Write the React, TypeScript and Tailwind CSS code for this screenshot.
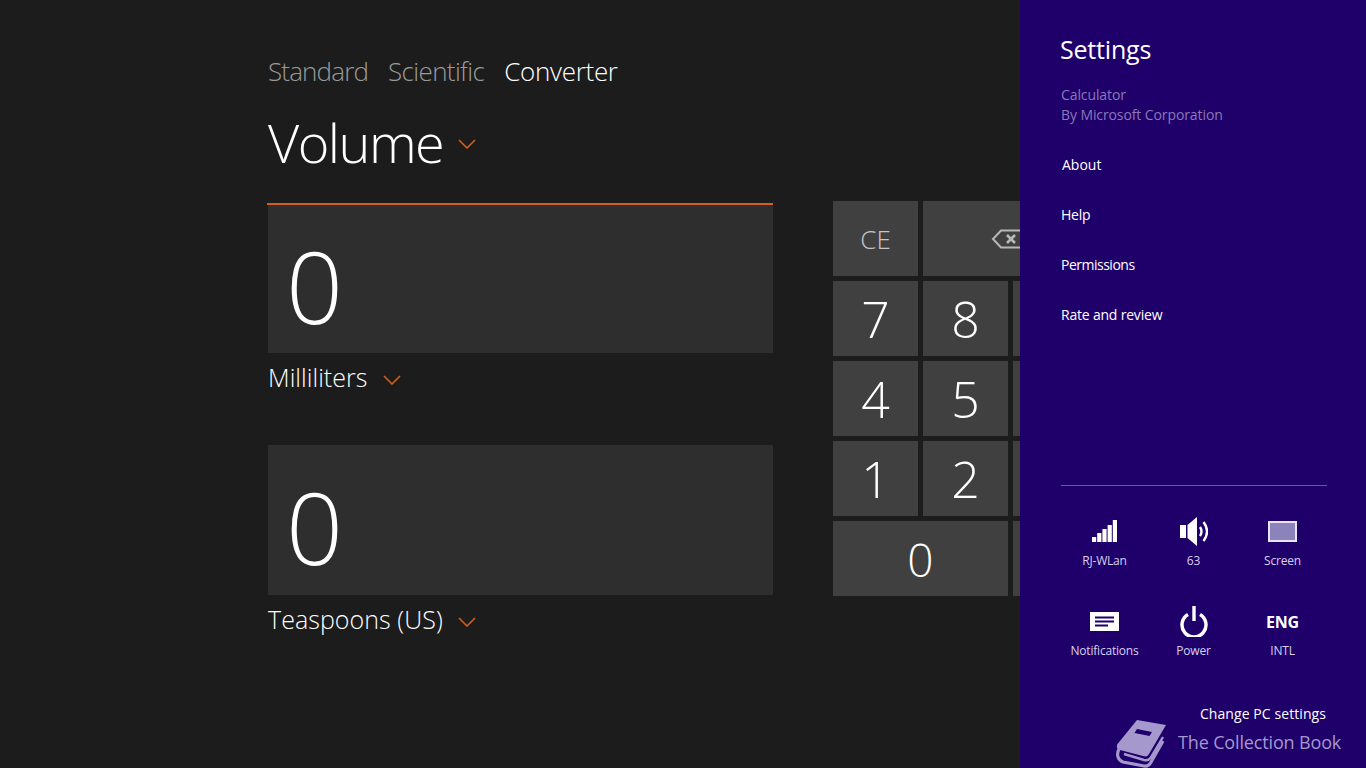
import { ReactNode } from "react";

const font = { ui: "font-['Open_Sans','Noto_Sans',sans-serif]" };

function Chevron({ className = "" }: { className?: string }) {
  return (
    <svg className={className} width="18" height="10" viewBox="0 0 18 10" fill="none" stroke="#d2601a" strokeWidth="1.6">
      <path d="M1 1l8 8 8-8" />
    </svg>
  );
}

function Key({ children, className = "text-white text-[50px]" }: { children?: ReactNode; className?: string }) {
  return (
    <div className={`bg-[#404040] flex items-center justify-center font-light leading-none ${className}`}>
      {children}
    </div>
  );
}

function Display({ label, height }: { label: string; height: string }) {
  return (
    <div>
      <div className={`${height} bg-[#2e2e2e] flex items-center pl-[18px]`}>
        <span className="text-white font-light text-[100px] leading-none mt-[12px]">0</span>
      </div>
      <div className="flex items-center gap-[15px] h-[50px] text-white text-[25px] font-light tracking-[0.05px]">
        <span>{label}</span>
        <Chevron className="mt-[4px]" />
      </div>
    </div>
  );
}

function Tile({ icon, label }: { icon: ReactNode; label: string }) {
  return (
    <div className="w-[89px] flex flex-col items-center">
      <div className="h-[32px] flex items-center justify-center">{icon}</div>
      <span className="text-[12px] leading-[16px] mt-[6px] text-[#d8d0ee] tracking-[-0.2px]">{label}</span>
    </div>
  );
}

export default function App() {
  return (
    <div className={`h-screen w-full flex overflow-hidden bg-[#1c1c1c] ${font.ui}`}>
      {/* calculator */}
      <div className="w-[1020px] shrink-0 overflow-hidden pl-[268px] pt-[49px]">
        <div className="flex gap-[20px] h-[44px] items-center text-[26px] font-light tracking-[-0.85px] text-[#9a9a9a]">
          <span>Standard</span>
          <span className="tracking-[-0.65px]">Scientific</span>
          <span className="text-white tracking-[-0.3px]">Converter</span>
        </div>
        <div className="flex items-center gap-[15px] h-[98px] text-white">
          <span className="text-[54px] font-light tracking-[-1.5px] leading-none">Volume</span>
          <Chevron className="mt-[4px]" />
        </div>
        <div className="flex gap-[60px] mt-[10px] w-[830px]">
          <div className="w-[505px] shrink-0 pt-[2px]">
            <div className="h-[2px] bg-[#d2601a] -ml-[1px]" />
            <Display label="Milliliters" height="h-[148px]" />
            <div className="h-[42px]" />
            <Display label="Teaspoons (US)" height="h-[150px]" />
          </div>
          <div className="grid grid-cols-[85px_85px_85px] auto-rows-[75px] gap-[5px] shrink-0">
            <Key className="text-[#c4c4c4] text-[26px]">CE</Key>
            <Key className="col-span-2">
              <svg width="40" height="20" viewBox="0 0 40 20" fill="none" stroke="#b8b8b8" strokeWidth="2">
                <path d="M10 1.500h28v17H10L2 10z" />
                <path d="M16 6l8 8M24 6l-8 8" strokeWidth="2.600" />
              </svg>
            </Key>
            <Key>7</Key>
            <Key>8</Key>
            <Key />
            <Key>4</Key>
            <Key>5</Key>
            <Key />
            <Key>1</Key>
            <Key>2</Key>
            <Key />
            <Key className="col-span-2 text-white text-[46px]">0</Key>
            <Key />
          </div>
        </div>
      </div>

      {/* settings charm */}
      <div className="relative w-[346px] shrink-0 bg-[#1f006a] pl-[41px] pr-[39px] pt-[30px] flex flex-col">
        <h1 className="text-white text-[25px] leading-[38px] -ml-[1px] tracking-[-0.2px]">Settings</h1>
        <div className="mt-[17px] text-[14px] leading-[20px] text-[#8a78b8] tracking-[-0.1px]">
          <div>Calculator</div>
          <div>By Microsoft Corporation</div>
        </div>
        <div className="mt-[14px] flex flex-col text-[14px] text-white tracking-[-0.2px]">
          <div className="h-[50px] flex items-center pl-[1px] tracking-[0px]">About</div>
          <div className="h-[50px] flex items-center">Help</div>
          <div className="h-[50px] flex items-center tracking-[-0.5px]">Permissions</div>
          <div className="h-[50px] flex items-center">Rate and review</div>
        </div>
        <div className="mt-[146px] h-px bg-[#6a54a6]" />
        <div className="mt-[29px] ml-[-1px] grid grid-cols-3 w-[267px] gap-y-[36px]">
          <Tile
            label="RJ-WLan"
            icon={
              <svg width="25" height="22" viewBox="0 0 25 22" fill="#fff">
                <rect x="0" y="17" width="4.200" height="5" />
                <rect x="5.200" y="13" width="4.200" height="9" />
                <rect x="10.400" y="9" width="4.200" height="13" />
                <rect x="15.600" y="5" width="4.200" height="17" />
                <rect x="20.800" y="0" width="4.200" height="22" />
              </svg>
            }
          />
          <Tile
            label="63"
            icon={
              <svg width="28" height="29" viewBox="0 0 28 29" fill="#fff">
                <path d="M0 8h6v13H0zM7.500 8L17 0v29L7.500 21z" />
                <path d="M20 10c2 3 2 6 0 9M23.500 5c4.500 6 4.500 13 0 19" fill="none" stroke="#fff" strokeWidth="2.400" />
              </svg>
            }
          />
          <Tile
            label="Screen"
            icon={<div className="w-[29px] h-[21px] border-2 border-[#e8e4f4] bg-[#8c82bc]" />}
          />
          <Tile
            label="Notifications"
            icon={
              <svg width="29" height="19" viewBox="0 0 29 19">
                <rect width="29" height="19" fill="#fff" />
                <path d="M5 5.500h19M5 9.500h19M5 13.500h13" stroke="#1f006a" strokeWidth="2" />
              </svg>
            }
          />
          <Tile
            label="Power"
            icon={
              <svg width="28" height="31" viewBox="0 0 28 31" fill="none" stroke="#fff" strokeWidth="3.400">
                <path d="M8 8.500a12 12 0 1 0 12 0" />
                <path d="M14 0v15" />
              </svg>
            }
          />
          <Tile label="INTL" icon={<span className="text-white font-bold text-[16px] leading-[22px] mt-[2px] tracking-[-0.2px]">ENG</span>} />
        </div>
        <div className="mt-[45px] mr-[1px] text-right text-white text-[14px] leading-[20px] tracking-[0.08px]">Change PC settings</div>

        {/* watermark */}
        <div className="absolute left-[95px] top-[719px] flex items-center gap-[11px] text-[#a498cc]">
          <svg width="52" height="49" viewBox="0 0 52 49" fill="none" className="shrink-0">
            <path d="M22 1l29 5-17 29c-1.500 2.500-3.500 3-6 2L5 31c-3-1-4-3-2.500-6z" fill="#a498cc" />
            <path d="M4 30c-3 6-1 11 4 13l21 4c3 .5 5-.5 6.500-3L48 22" stroke="#a498cc" strokeWidth="3.200" />
            <path d="M9 35l20 6c3 .8 5 0 6.500-2L48 18" stroke="#a498cc" strokeWidth="2.400" />
            <path d="M22 10l15 3-2.500 4-15-3z" fill="#1f006a" />
          </svg>
          <span className="text-[18px] mb-[2px] tracking-[-0.15px] whitespace-nowrap">The Collection Book</span>
        </div>
      </div>
    </div>
  );
}
